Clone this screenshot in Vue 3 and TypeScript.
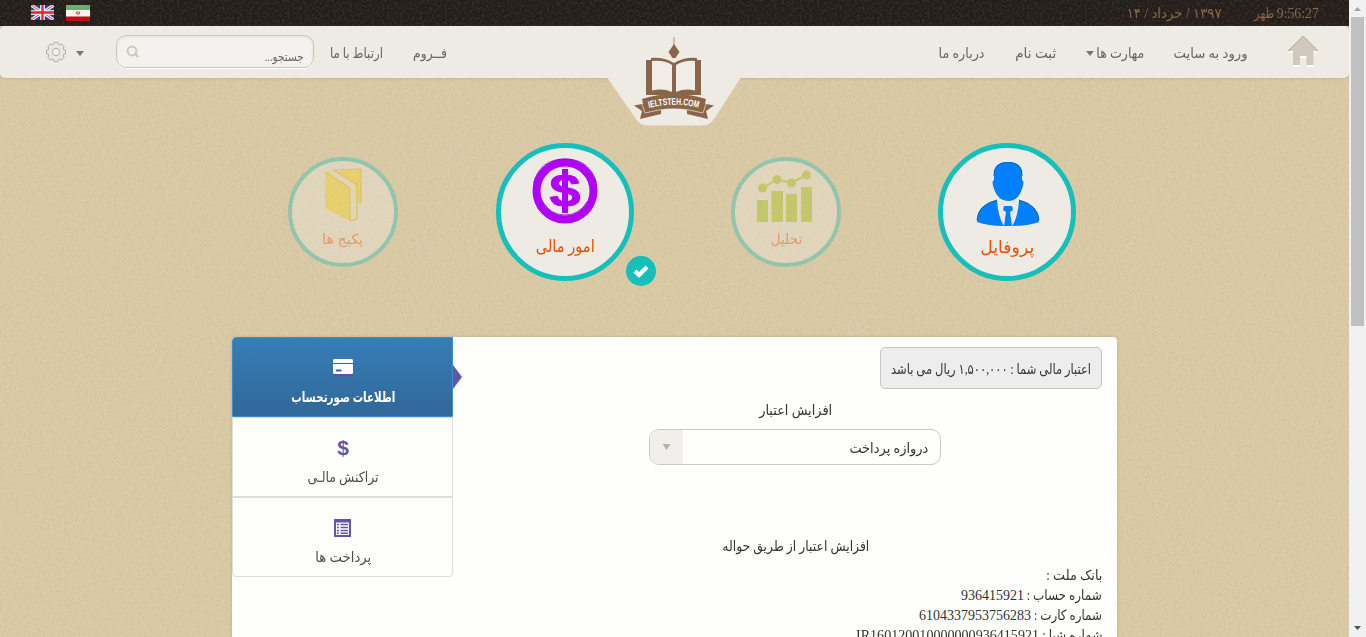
<script setup lang="ts">
interface Line { label: string; labelWidth: number; value: string; valueWidth: number }

// Condenses or widens a line of text to an exact width, keeping its flow size in step.
const vFit = {
  mounted(el: HTMLElement, binding: { value: number }) {
    const natural = el.getBoundingClientRect().width
    if (!natural) return
    el.style.transform = `scaleX(${binding.value / natural})`
    el.style.marginLeft = `${binding.value - natural}px`
  },
}

const bankLines: Line[] = [
  { label: 'بانک ملت :', labelWidth: 56, value: '', valueWidth: 0 },
  { label: 'شماره حساب :', labelWidth: 75, value: '936415921', valueWidth: 63 },
  { label: 'شماره کارت :', labelWidth: 68, value: '6104337953756283', valueWidth: 112 },
  { label: 'شماره شبا :', labelWidth: 60, value: 'IR160120010000000936415921', valueWidth: 183 },
]
const teeth = [0, 45, 90, 135, 180, 225, 270, 315]
</script>

<template>
  <div class="screen">
    <div class="page" dir="rtl">
      <svg class="texture" width="1349" height="637">
        <filter id="grain" x="0" y="0" width="100%" height="100%">
          <feTurbulence type="fractalNoise" baseFrequency="0.42" numOctaves="2" seed="4" />
          <feColorMatrix values="0 0 0 0 .55  0 0 0 0 .42  0 0 0 0 .2  .65 0 0 0 -.24" />
        </filter>
        <filter id="darkgrain" x="0" y="0" width="100%" height="100%">
          <feTurbulence type="fractalNoise" baseFrequency="0.4" numOctaves="2" seed="9" />
          <feColorMatrix values="0 0 0 0 .3  0 0 0 0 .25  0 0 0 0 .22  .4 0 0 0 -.16" />
        </filter>
        <rect y="26" width="1349" height="611" filter="url(#grain)" />
      </svg>

      <div class="topbar">
        <svg class="texture" width="1349" height="26"><rect width="1349" height="26" filter="url(#darkgrain)" /></svg>
        <span class="clock"><span v-fit="42" class="t">9:56:27</span><span v-fit="20" class="t">ظهر</span></span>
        <span v-fit="95" class="t date">۱۳۹۷ / خرداد / ۱۴</span>
        <span class="grow"></span>
        <svg class="flag iran" width="24" height="16" viewBox="0 0 24 16">
          <rect width="24" height="16" fill="#f4f4f4" />
          <rect width="24" height="5" fill="#62b26e" />
          <rect y="11.5" width="24" height="4.5" fill="#c50d0d" />
          <path d="M12 6v4M10.5 6.7q-1 1.3.5 2.6M13.5 6.7q1 1.3-.5 2.6" stroke="#d84a4a" stroke-width="1" fill="none" />
        </svg>
        <svg class="flag" width="23" height="15" viewBox="0 0 23 15">
          <rect width="23" height="15" fill="#16459b" />
          <path d="M0 0L23 15M23 0L0 15" stroke="#f1eef4" stroke-width="3.2" />
          <path d="M0 0L23 15M23 0L0 15" stroke="#d8434c" stroke-width="1" />
          <path d="M11.5 0V15M0 7.5H23" stroke="#fff" stroke-width="4.6" />
          <path d="M11.5 0V15M0 7.5H23" stroke="#d7262f" stroke-width="2.3" />
        </svg>
      </div>

      <nav class="nav">
        <svg class="home" width="30" height="33" viewBox="0 0 30 33">
          <path d="M15 2L30 16.5H25.5V31H19V22H12V31H5V16.500H0Z" fill="#fff" transform="translate(0 1)" />
          <path d="M15 1L30 16H25.500V30H18.500V21H12V30H5V16H0Z" fill="#cfc8bb" />
          <path d="M0 16L15 1L30 16" fill="none" stroke="#b2ab9f" />
        </svg>
        <span v-fit="74" class="t">ورود به سایت</span>
        <span class="drop"><span v-fit="48" class="t">مهارت ها</span><i class="caret"></i></span>
        <span v-fit="41" class="t">ثبت نام</span>
        <span v-fit="46" class="t">درباره ما</span>
        <span class="grow"></span>
        <span v-fit="34" class="t">فــروم</span>
        <span v-fit="53" class="t">ارتباط با ما</span>
        <div class="search">
          <span v-fit="39" class="t hint">جستجو...</span>
          <svg width="14" height="14" viewBox="0 0 14 14" fill="none" stroke="#cfc7b8">
            <circle cx="6" cy="6" r="4.4" stroke-width="2" /><path d="M9 9L12.5 12" stroke-width="2.3" />
          </svg>
        </div>
        <div class="settings">
          <i class="caret"></i>
          <svg width="20" height="20" viewBox="-10 -10 20 20" fill="#e9e7e2" stroke="#aaa79f" stroke-width=".9">
            <path v-for="a in teeth" :key="a" d="M-2.9-7L-1.9-9.5H1.9L2.9-7" :transform="`rotate(${a})`" />
            <circle r="7.3" stroke="none" />
            <circle r="3.6" fill="#f3f1ec" />
          </svg>
        </div>
        <svg class="notch" width="134" height="100" viewBox="0 0 134 100">
          <path d="M0 51.500H134L107 93Q103 99.500 95 99.500H41Q33 99.500 29 93Z" fill="#eeebe5" />
          <g fill="#8a6549">
            <path d="M67 11V22" stroke="#a18a78" stroke-width=".9" />
            <path d="M67 18L72.500 26L68.500 32H65.500L61.500 26Z" />
            <path d="M39 34H44V32Q57 31 67 37Q77 31 90 32V34H94V69H39Z" />
            <path d="M45 35Q58 34 65 39V66Q56 62 45 64.500ZM69 39Q78 34 88 35V64.500Q78 62 69 66Z" fill="#f0ede7" />
            <path d="M40 77L27 79.500L35 85L33 93L54 88V83ZM94 77L107 79.500L99 85L101 93L80 88V83Z" />
            <path d="M35 73Q67 63 99 73L96 87Q67 78 38 87Z" />
            <path d="M35 78L38 87L54 83.500M99 78L96 87L80 83.500" stroke="#d8ccc0" fill="none" stroke-width=".9" />
          </g>
          <path id="ribbon" d="M42 82Q67 75.500 92 82" fill="none" />
          <text class="brand"><textPath href="#ribbon" textLength="50" lengthAdjust="spacingAndGlyphs">IELTSTEH.COM</textPath></text>
        </svg>
      </nav>

      <section class="circles">
        <div class="circle large">
          <svg width="64" height="66" viewBox="0 0 64 66">
            <path d="M18 14Q17 0 32 0Q47 0 46 14V18Q49 19 46 27Q42 39 32 39Q22 39 18 27Q15 19 18 18ZM21 38Q22 55 28 64Q12 64 1 60Q0 43 21 38ZM43 38Q63 43 63 60Q52 64 36 64Q42 55 43 38ZM28 44H36L37 48L34 50L36 64H28L30 50L27 48Z" fill="#0080ff" />
            <path d="M18 14Q17 .5 32 .5Q47 .5 46 14M1 58Q2 43 21 38M43 38Q62 43 63 58" stroke="#0961b8" fill="none" />
          </svg>
          <span v-fit="54" class="t label">پروفایل</span>
        </div>
        <div class="circle small">
          <svg width="56" height="54" viewBox="0 0 56 54" fill="#9ec609">
            <path d="M0 31H11V53H0ZM14.500 22H26V53H14.500ZM29 25H40V53H29ZM44 18H55V53H44Z" />
            <circle cx="5.500" cy="19" r="4.500" /><circle cx="20" cy="10.500" r="4.500" /><circle cx="34.500" cy="14" r="4.500" /><circle cx="49.500" cy="6" r="4.500" />
            <path d="M5.500 19L20 10.500L34.500 14L49.500 6" fill="none" stroke="#9ec609" stroke-width="2" />
          </svg>
          <span v-fit="32" class="t label">تحلیل</span>
        </div>
        <div class="circle large">
          <svg class="coin" width="66" height="66" viewBox="0 0 66 66">
            <circle cx="33" cy="33" r="28.500" fill="none" stroke="#b200ff" stroke-width="8" />
            <path d="M1.500 25Q8 1 33 1Q58 1 64.500 25M11 44Q19 57 33 57Q47 57 55 44" fill="none" stroke="#7b1caa" stroke-width=".8" />
            <text x="33" y="49" class="dollar" text-anchor="middle" textLength="31" lengthAdjust="spacingAndGlyphs">$</text>
            <path d="M30 11h6v44h-6z" fill="#b200ff" />
          </svg>
          <span v-fit="59" class="t label">امور مالی</span>
          <span class="check"><svg width="16" height="14" viewBox="0 0 16 14"><path d="M2 7L6 11L14 3" fill="none" stroke="#fff" stroke-width="4.200" /></svg></span>
        </div>
        <div class="circle small last">
          <svg width="38" height="54" viewBox="0 0 38 54">
            <path d="M1 4L37 1V35H33V51L26 53L1 40Z" fill="#fcdd0e" />
            <path d="M5 5L10 3L32 18V50L26.500 52V20Z" fill="#eeebe5" />
            <path d="M1 4L26 20V53L33 51V16L9 2L37 1V35" fill="none" stroke="#d8ae19" />
          </svg>
          <span v-fit="41" class="t label">پکیج ها</span>
        </div>
      </section>

      <section class="panel">
        <div class="content">
          <div class="balance"><span v-fit="200" class="t">اعتبار مالی شما : ۱,۵۰۰,۰۰۰ ریال می باشد</span></div>
          <div class="heading"><span v-fit="73" class="t">افزایش اعتبار</span></div>
          <div class="select">
            <span v-fit="79" class="t">دروازه پرداخت</span>
            <span class="arrow"><i class="caret"></i></span>
          </div>
          <div class="heading transfer"><span v-fit="147" class="t">افزایش اعتبار از طریق حواله</span></div>
          <div v-for="line in bankLines" :key="line.label" class="bank">
            <span v-fit="line.labelWidth" class="t">{{ line.label }}</span>
            <span v-if="line.value" v-fit="line.valueWidth" class="t">{{ line.value }}</span>
          </div>
        </div>
        <aside class="tabs">
          <div class="tab active">
            <svg width="20" height="18" viewBox="0 0 20 18"><rect y="2" width="20" height="15.500" rx="1" fill="#5e52a5" /><rect y="0" width="20" height="15" rx="1.500" fill="#fff" /><path d="M0 4.500H20" stroke="#31679a" /><path d="M3 11.500H8.500" stroke="#31679a" stroke-width="2" /></svg>
            <span v-fit="104" class="t">اطلاعات صورتحساب</span>
          </div>
          <div class="tab">
            <svg width="14" height="22" viewBox="0 0 14 22"><text x="7" y="18" class="money" text-anchor="middle">$</text></svg>
            <span v-fit="71" class="t">تراکنش مالـی</span>
          </div>
          <div class="tab">
            <svg width="17" height="18" viewBox="0 0 17 18"><path d="M0 0H17V18H0Z" fill="#6157a8" /><path d="M2 3.500H15V16H2Z" fill="#fff" /><path d="M3 5.500H5M6.500 5.500H14M3 8.500H5M6.500 8.500H14M3 11.500H5M6.500 11.500H14M3 14.200H5M6.500 14.200H14" stroke="#6157a8" stroke-width="1.500" /></svg>
            <span v-fit="56" class="t">پرداخت ها</span>
          </div>
        </aside>
      </section>
    </div>
    <div class="scrollbar"><i class="up"></i><div class="thumb"></div><i class="down"></i></div>
  </div>
</template>

<style>
html, body { overflow: hidden; }
</style>

<style scoped>
* { box-sizing: border-box; }
.screen { display: flex; width: 1366px; height: 637px; overflow: hidden; font: 14px/20px "Liberation Serif", "DejaVu Sans", sans-serif; color: #333; }
.page { position: relative; width: 1349px; height: 637px; overflow: hidden; background: #dccba9; }
.texture { position: absolute; left: 0; top: 0; }
.t { display: inline-block; flex: none; white-space: nowrap; transform-origin: right center; padding-top: 1px; }
.grow { flex: 1; }
svg { flex: none; display: block; }
.topbar { position: relative; height: 26px; display: flex; align-items: center; padding: 1px 30px 0 31px; background: #231d1a; color: #8d6649; }
.topbar > :not(.texture) { position: relative; }
.clock { display: flex; gap: 3px; }
.date { margin-right: 32px; }
.iran { margin: 0 0 0 12px; }
.flag { top: -1px; }
.nav { position: relative; height: 52px; display: flex; align-items: center; padding: 0 31px 0 46px; border-radius: 5px; background: #eeebe5; box-shadow: 0 1px 3px #a9957466; color: #666563; }
.nav > .t, .drop { margin-right: 30px; padding-top: 3px; }
.drop .t { padding-top: 0; }
.nav > .home + .t { margin-right: 40px; }
.home { margin-top: -1px; }
.drop { display: flex; align-items: center; gap: 2px; }
.caret { flex: none; width: 8px; height: 5px; background: #777570; clip-path: polygon(0 0, 100% 0, 50% 100%); }
.search { width: 198px; height: 33px; margin: -1px 16px 0 0; padding: 0 9px; display: flex; align-items: center; justify-content: space-between; border: 1px solid #cbc4b8; border-radius: 10px; background: #f4f2ee; box-shadow: inset 0 1px 3px #bbb3a744, 0 1px #fff; }
.hint { font-size: 12px; padding-top: 10px; }
.settings { display: flex; align-items: center; gap: 10px; margin-right: 32px; }
.settings .caret { margin-top: 3px; }
.notch { position: absolute; left: 607px; top: 0; }
.brand { font: bold 9.5px "Liberation Sans", sans-serif; fill: #fff; direction: ltr; }
.circles { position: relative; height: 259px; display: flex; align-items: flex-start; gap: 97px; padding: 65px 273px 0 0; }
.circle { position: relative; flex: none; display: flex; flex-direction: column; align-items: center; border: 5px solid #15c0ba; border-radius: 50%; background: #eeebe5; color: #e94f00; }
.large { width: 138px; height: 138px; padding-top: 14px; font-size: 17px; }
.large > svg { position: relative; left: 1px; }
.large .label { margin-top: 9px; }
.large .coin { left: 0; margin-top: -4px; }
.large .coin + .label { margin-top: 12px; }
.small { width: 110px; height: 110px; margin-top: 14px; padding-top: 8px; border-width: 4px; opacity: .36; font-size: 14px; }
.small > svg { position: relative; left: -1px; }
.small .label { position: relative; margin-top: 6px; }
.last > svg { left: 0; top: -1px; }
.last { margin-right: 1px; }
.dollar { font: bold 47px "Liberation Sans", sans-serif; fill: #b200ff; stroke: #b200ff; stroke-width: 1px; direction: ltr; }
.check { position: absolute; left: 125px; top: 108px; width: 30px; height: 30px; display: flex; align-items: center; justify-content: center; border-radius: 50%; background: #15c0ba; }
.panel { position: relative; width: 885px; height: 320px; margin-right: 232px; display: flex; justify-content: space-between; border-radius: 4px; background: #fefefd; box-shadow: 0 0 3px #b8a98f; }
.content { width: 644px; padding: 10px 15px; }
.balance { width: 222px; height: 42px; display: flex; align-items: center; padding: 2px 10px 0 0; border: 1px solid #c6c6c6; border-radius: 5px; background: #ededed; }
.heading { height: 20px; margin-top: 11px; text-align: center; }
.heading .t { position: relative; left: 1px; }
.select { width: 292px; height: 36px; margin: 9px auto 0; display: flex; align-items: center; justify-content: space-between; padding-right: 12px; border: 1px solid #c9c9c9; border-radius: 10px; overflow: hidden; }
.select .t { padding-top: 3px; }
.arrow { width: 33px; height: 34px; display: flex; align-items: center; justify-content: center; background: #f1efeb; }
.arrow .caret { height: 6px; background: #b9b0a2; }
.transfer { margin-top: 71px; margin-bottom: 10px; }
.bank { height: 20px; display: flex; gap: 3px; }
.bank .t { padding-top: 0; }
.tabs { position: relative; width: 221px; }
.tabs::after { content: ""; position: absolute; left: 221px; top: 28px; width: 9px; height: 24px; background: #6157a8; clip-path: polygon(0 0, 100% 50%, 0 100%); }
.tab { height: 80px; display: flex; flex-direction: column; align-items: center; justify-content: flex-end; gap: 10px; padding-bottom: 8px; border: 1px solid #ddd; background: #fefefd; color: #4c4c4c; }
.tab .t { position: relative; left: 1px; }
.tab:nth-child(2) { gap: 8px; }
.tab:last-child { border-radius: 0 0 4px 4px; }
.active { border-color: #428bca; border-radius: 4px 0 0; background: linear-gradient(#377db7, #306899); color: #fff; font-weight: bold; }
.money { font: bold 21px "Liberation Sans", sans-serif; fill: #6157a8; direction: ltr; }
.scrollbar { width: 17px; height: 637px; display: flex; flex-direction: column; align-items: center; justify-content: space-between; background: #f1f1f1; padding: 7px 0; }
.thumb { width: 13px; height: 309px; margin: 6px 0 auto; background: #c1c1c1; }
.up, .down { width: 7px; height: 4px; background: #a3a3a3; clip-path: polygon(50% 0, 100% 100%, 0 100%); }
.down { background: #505050; transform: rotate(180deg); }
</style>
